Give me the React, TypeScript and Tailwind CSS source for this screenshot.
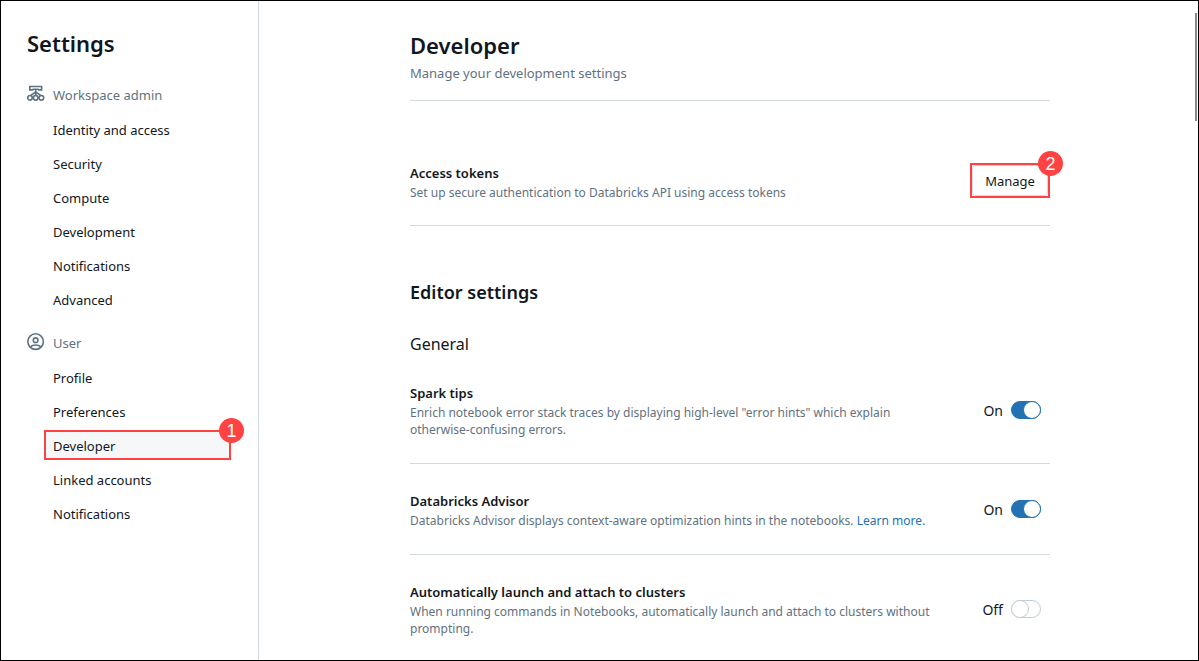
import { useState, type ReactNode } from "react";

function WorkspaceIcon() {
  return (
    <svg className="h-[18px] w-[18px] shrink-0" viewBox="0 0 18 18" fill="none" stroke="currentColor" strokeWidth="1.6" aria-hidden="true">
      <path d="M6.4 4.9H2.8V1.5h11.8v3.4H11M5.6 4.2h6" />
      <path d="M8.7 4.2v6M8.7 7 3.8 10.4M8.7 7l4.9 3.4" />
      <circle cx="3" cy="12.8" r="2.3" />
      <circle cx="8.7" cy="12.8" r="2.3" />
      <circle cx="14.4" cy="12.8" r="2.3" />
    </svg>
  );
}

function UserIcon() {
  return (
    <svg className="h-[18px] w-[18px] shrink-0" viewBox="0 0 18 18" fill="none" stroke="currentColor" strokeWidth="1.6" aria-hidden="true">
      <circle cx="8.6" cy="8.6" r="7.8" />
      <circle cx="8.6" cy="7.2" r="2.3" />
      <path d="M3.2 13.9c1.4-1.2 3.3-1.9 5.4-1.9s4 .7 5.4 1.9" />
    </svg>
  );
}

function Badge({ children }: { children: ReactNode }) {
  return (
    <span className="absolute -top-[14px] -right-[15px] flex size-[25px] items-center justify-center rounded-full bg-[#ff4242] font-['Liberation_Sans',sans-serif] text-[18px] leading-none text-white">
      {children}
    </span>
  );
}

function NavGroup({ icon, title, items, active }: { icon: ReactNode; title: string; items: string[]; active?: string }) {
  return (
    <section>
      <h2 className="flex h-[30px] items-center gap-2 pl-[26px] text-[#5f7281]">
        {icon}
        <span className="pt-[2px]">{title}</span>
      </h2>
      <ul className="mt-[5px] flex flex-col gap-1 pr-[27px] pl-[43px]">
        {items.map((item) => (
          <li key={item}>
            <a
              href="#"
              aria-current={item === active ? "page" : undefined}
              className={
                item === active
                  ? "relative flex h-[30px] items-center border-2 border-[#ff4242] bg-[#f6f7f9] pt-[2px] pl-[7px]"
                  : "flex h-[30px] items-center pt-[2px] pl-[9px]"
              }
            >
              {item}
              {item === active && <Badge>1</Badge>}
            </a>
          </li>
        ))}
      </ul>
    </section>
  );
}

function Row({ title, description, children }: { title: string; description: ReactNode; children: ReactNode }) {
  return (
    <div className="flex items-center justify-between">
      <div className="max-w-[535px]">
        <h4 className="leading-5 font-semibold">{title}</h4>
        <p className="mt-px text-[12px] leading-[17px] text-[#5f7281]">{description}</p>
      </div>
      {children}
    </div>
  );
}

function Toggle({ label, initial }: { label: string; initial: boolean }) {
  const [on, setOn] = useState(initial);
  return (
    <label className="flex items-center gap-2 pr-[9px] pb-[2px] text-[14px]">
      <span className="pt-[2px]">{on ? "On" : "Off"}</span>
      <input
        type="checkbox"
        role="switch"
        aria-label={label}
        checked={on}
        onChange={(e) => setOn(e.target.checked)}
        className="relative h-[18px] w-[30px] appearance-none rounded-full border border-[#c0cdd8] bg-white before:absolute before:-top-px before:-left-px before:size-[18px] before:rounded-full before:border before:border-[#c0cdd8] before:bg-white checked:border-[#2272b4] checked:bg-[#2272b4] checked:before:left-[11px] checked:before:border-[#2272b4]"
      />
    </label>
  );
}

export default function App() {
  return (
    <div className="relative flex min-h-screen border border-black bg-white font-['Noto_Sans','Open_Sans',sans-serif] text-[13px] leading-5 text-[#11171c]">
      <nav aria-label="Settings" className="w-[258px] shrink-0 border-r border-[#d1d9e1] pt-[26px]">
        <h1 className="pl-[26px] text-[22px] leading-8 font-semibold">Settings</h1>
        <div className="mt-5 flex flex-col gap-[13px]">
          <NavGroup
            icon={<WorkspaceIcon />}
            title="Workspace admin"
            items={["Identity and access", "Security", "Compute", "Development", "Notifications", "Advanced"]}
          />
          <NavGroup
            icon={<UserIcon />}
            title="User"
            items={["Profile", "Preferences", "Developer", "Linked accounts", "Notifications"]}
            active="Developer"
          />
        </div>
      </nav>
      <main className="min-w-0 grow pt-[28px] pl-[3px]">
        <div className="mx-auto max-w-[640px]">
          <header className="border-b border-[#d1d9e1] pb-[17px]">
            <h2 className="text-[22px] leading-8 font-semibold">Developer</h2>
            <p className="pt-[2px] text-[#5f7281]">Manage your development settings</p>
          </header>
          <section className="border-b border-[#d1d9e1] pt-[62px] pb-6">
            <Row title="Access tokens" description="Set up secure authentication to Databricks API using access tokens">
              <button type="button" className="relative h-[35px] w-20 self-start border-2 border-[#ff4242]">
                <span className="flex h-full items-center justify-center rounded-[4px] border border-[#d1d9e1]">Manage</span>
                <Badge>2</Badge>
              </button>
            </Row>
          </section>
          <section className="pt-[52px]">
            <h3 className="text-[18px] leading-7 font-semibold">Editor settings</h3>
            <p className="mt-[26px] text-[16px] leading-6">General</p>
            <div className="-mb-[25px] flex flex-col divide-y divide-[#d1d9e1] *:pt-[27px] *:pb-[25px]">
              <Row
                title="Spark tips"
                description={'Enrich notebook error stack traces by displaying high-level "error hints" which explain otherwise-confusing errors.'}
              >
                <Toggle label="Spark tips" initial={true} />
              </Row>
              <Row
                title="Databricks Advisor"
                description={
                  <>
                    Databricks Advisor displays context-aware optimization hints in the notebooks.{" "}
                    <a href="#" className="text-[#2272b4]">Learn more.</a>
                  </>
                }
              >
                <Toggle label="Databricks Advisor" initial={true} />
              </Row>
              <div className="last:pb-5">
                <Row
                  title="Automatically launch and attach to clusters"
                  description="When running commands in Notebooks, automatically launch and attach to clusters without prompting."
                >
                  <Toggle label="Automatically launch and attach to clusters" initial={false} />
                </Row>
              </div>
            </div>
          </section>
        </div>
      </main>
      <div className="absolute top-3 right-px h-[108px] w-[2px] bg-[#888888]" />
    </div>
  );
}
